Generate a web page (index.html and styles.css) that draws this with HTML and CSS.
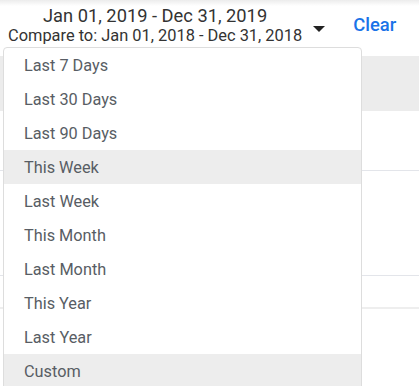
FILE: index.html
```html
<!DOCTYPE html>
<html>
<head>
<meta charset="utf-8">
<link rel="stylesheet" href="styles.css">
</head>
<body>
<div class="page">
  <div class="topshade"></div>
  <header class="bar">
    <div class="range">
      <div class="main">Jan 01, 2019 - Dec 31, 2019</div>
      <div class="compare">Compare to: Jan 01, 2018 - Dec 31, 2018</div>
    </div>
    <span class="caret"></span>
    <button class="clear">Clear</button>
  </header>
  <div class="content">
    <div class="band"></div>
    <div class="row r1"></div>
    <div class="row r2"></div>
    <div class="row r3"></div>
  </div>
  <ul class="menu">
    <li class="item">Last 7 Days</li>
    <li class="item">Last 30 Days</li>
    <li class="item">Last 90 Days</li>
    <li class="item active">This Week</li>
    <li class="item">Last Week</li>
    <li class="item">This Month</li>
    <li class="item">Last Month</li>
    <li class="item">This Year</li>
    <li class="item">Last Year</li>
    <li class="item active">Custom</li>
  </ul>
</div>
</body>
</html>
```

FILE: styles.css
```css
html, body {
  margin: 0;
  padding: 0;
  background: #fff;
  overflow: hidden;
}
.page {
  position: relative;
  width: 419px;
  height: 386px;
  font-family: Roboto, "Liberation Sans", sans-serif;
}
.topshade {
  position: absolute;
  left: 0;
  top: 0;
  width: 100%;
  height: 6px;
  background: linear-gradient(#ececec, rgba(255,255,255,0));
}
.bar {
  display: flex;
  align-items: center;
  padding: 6px 0 0 8px;
  height: 44px;
  box-sizing: border-box;
}
.range {
  text-align: center;
  color: #333;
}
.main {
  font-size: 18.3px;
  line-height: 21px;
}
.compare {
  font-size: 16.4px;
  line-height: 19px;
}
.caret {
  width: 0;
  height: 0;
  border-left: 6px solid transparent;
  border-right: 6px solid transparent;
  border-top: 6px solid #222;
  margin: 7px 0 0 11px;
}
.clear {
  margin-left: 28px;
  border: 0;
  background: none;
  padding: 0;
  font-family: Roboto, "Liberation Sans", sans-serif;
  font-size: 18.4px;
  font-weight: 500;
  color: #1a73e8;
  margin-top: -2px;
}
.content {
  display: flex;
  flex-direction: column;
  padding-top: 12px;
}
.band {
  height: 55px;
  background: #ececec;
}
.row {
  border-bottom: 1px solid #e3e5ea;
}
.r1 { height: 59px; }
.r2 { height: 104px; }
.r3 { height: 31px; border-bottom: 2px solid #eeeeee; }
.menu {
  position: absolute;
  left: 3px;
  top: 47px;
  width: 357px;
  margin: 0;
  padding: 0;
  list-style: none;
  background: #fff;
  border: 1px solid #dddddd;
  border-radius: 4px 4px 0 0;
}
.item {
  height: 34px;
  line-height: 35px;
  padding-left: 20px;
  font-size: 16.3px;
  color: #585d64;
}
.item.active {
  background: #ededed;
}
```
